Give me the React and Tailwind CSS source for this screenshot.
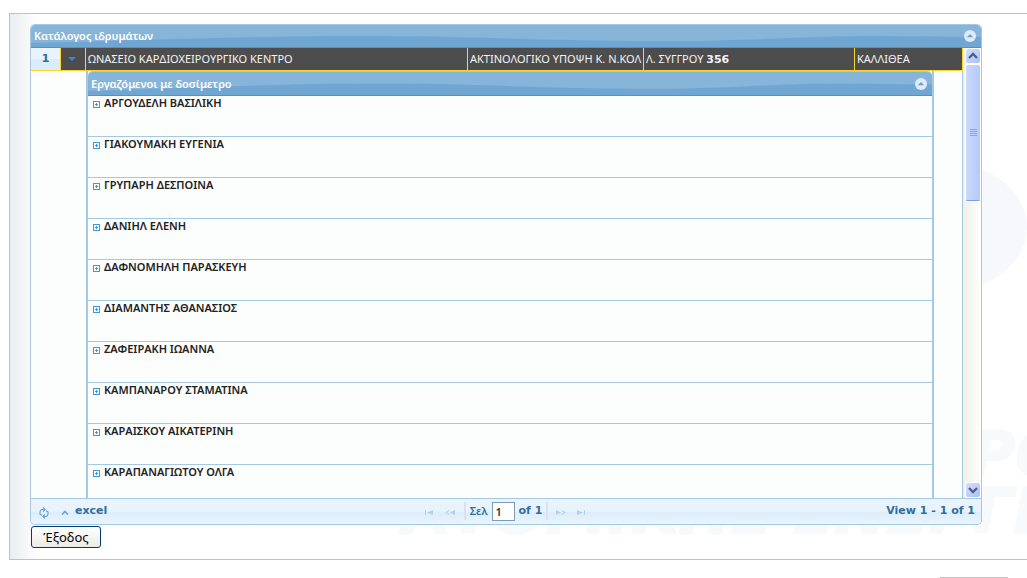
import React from "react";

const employees = [
  "ΑΡΓΟΥΔΕΛΗ ΒΑΣΙΛΙΚΗ",
  "ΓΙΑΚΟΥΜΑΚΗ ΕΥΓΕΝΙΑ",
  "ΓΡΥΠΑΡΗ ΔΕΣΠΟΙΝΑ",
  "ΔΑΝΙΗΛ ΕΛΕΝΗ",
  "ΔΑΦΝΟΜΗΛΗ ΠΑΡΑΣΚΕΥΗ",
  "ΔΙΑΜΑΝΤΗΣ ΑΘΑΝΑΣΙΟΣ",
  "ΖΑΦΕΙΡΑΚΗ ΙΩΑΝΝΑ",
  "ΚΑΜΠΑΝΑΡΟΥ ΣΤΑΜΑΤΙΝΑ",
  "ΚΑΡΑΙΣΚΟΥ ΑΙΚΑΤΕΡΙΝΗ",
  "ΚΑΡΑΠΑΝΑΓΙΩΤΟΥ ΟΛΓΑ",
];

function CaptionBar({ title, className }) {
  return (
    <div
      className={`relative flex items-center justify-between overflow-hidden rounded-t-[5px] border-t border-b border-t-[#a6c9e2] border-b-[#4297d7] bg-[#87b4d9] pr-[5px] pl-[3px] ${className}`}
    >
      <svg
        aria-hidden="true"
        className="absolute inset-0 h-full w-full"
        viewBox="0 0 950 22"
        preserveAspectRatio="none"
      >
        <path
          d="M0 18 C100 16 200 11 330 11 C450 11 500 16 640 16 C720 16 770 11 850 11 L950 12 V22 H0 Z"
          fill="#70a7d2"
        />
      </svg>
      <h2 className="relative text-[11px] leading-4 font-semibold text-white">{title}</h2>
      <button type="button" aria-label="Απόκρυψη πίνακα" className="relative h-3 w-3">
        <svg viewBox="0 0 12 12" className="block h-3 w-3">
          <circle cx="6" cy="6" r="6" fill="#dfeaf6" />
          <path d="M2.800 7.300 L6 4.100 L9.200 7.300 Z" fill="#6ba3d0" />
        </svg>
      </button>
    </div>
  );
}

function ScrollArrow({ d }) {
  return (
    <button
      type="button"
      aria-label="Κύλιση"
      className="flex h-4 w-full shrink-0 items-center justify-center rounded-[3px] border border-white bg-linear-to-br from-[#d5e0fd] to-[#a9c0f8]"
    >
      <svg viewBox="0 0 10 8" className="h-2 w-[10px]" fill="none" stroke="#4d6185" strokeWidth="2.4">
        <path d={d} />
      </svg>
    </button>
  );
}

function PagerButton({ label, children }) {
  return (
    <button type="button" disabled aria-label={label} className="h-[7px] w-3">
      <svg viewBox="0 0 12 7" className="block h-[7px] w-3" fill="#b0d2ec" stroke="none">
        {children}
      </svg>
    </button>
  );
}

function InstitutionRow() {
  const cell = "overflow-hidden border-r border-b border-[#fad42e] p-0 pl-[2px] whitespace-nowrap";
  return (
    <tr className="h-[23px] bg-[#4d4d4d] text-[#f4f4f4]">
      <td className="w-[30px] border-r border-b border-[#fad42e] bg-linear-to-b from-[#e9f3fd] from-50% to-[#dbedfb] to-50% p-0 text-center font-['DejaVu_Sans',sans-serif] font-semibold text-[#2e6e9e]">
        1
      </td>
      <td className="w-[25px] border-r border-b border-[#fad42e] p-0">
        <button type="button" aria-label="Σύμπτυξη" className="flex w-full justify-center pr-[3px]">
          <svg viewBox="0 0 8 4" className="h-1 w-2">
            <path d="M0 0 H8 L4 4 Z" fill="#2f86f5" />
          </svg>
        </button>
      </td>
      <td className={cell}>ΩΝΑΣΕΙΟ ΚΑΡΔΙΟΧΕΙΡΟΥΡΓΙΚΟ ΚΕΝΤΡΟ</td>
      <td className={`w-44 ${cell}`}>ΑΚΤΙΝΟΛΟΓΙΚΟ ΥΠΟΨΗ Κ. Ν.ΚΟΛ</td>
      <td className={`w-[211px] ${cell}`}>
        Λ. ΣΥΓΓΡΟΥ <span className="font-['DejaVu_Sans',sans-serif] leading-3 font-semibold">356</span>
      </td>
      <td className={`w-[108px] ${cell}`}>ΚΑΛΛΙΘΕΑ</td>
    </tr>
  );
}

function EmployeeGrid() {
  return (
    <section className="mr-7 border-x-2 border-[#a6c9e2]">
      <CaptionBar title="Εργαζόμενοι με δοσίμετρο" className="h-[25px]" />
      <ul>
        {employees.map((name) => (
          <li key={name} className="flex h-[41px] items-start border-b border-[#a6c9e2] pl-[5px]">
            <button type="button" aria-label={name} className="mt-[5px] mr-1 h-[7px] w-[7px]">
              <svg viewBox="0 0 7 7" className="block h-[7px] w-[7px]" shapeRendering="crispEdges">
                <path d="M0 0H7V7H0Z M1 1V6H6V1Z M3 2H4V3H5V4H4V5H3V4H2V3H3Z" fill="#4297d7" fillRule="evenodd" />
              </svg>
            </button>
            <span className="text-[11px] leading-[14px] font-semibold text-[#222222]">{name}</span>
          </li>
        ))}
      </ul>
    </section>
  );
}

export default function App() {
  return (
    <div className="relative overflow-hidden bg-white font-['Noto_Sans',sans-serif] text-[11px] leading-4">
      <div className="relative mt-[13px] ml-[9px] overflow-hidden border-y border-l border-[#b9c4c4] pt-[10px] pb-[11px]">
        <div className="absolute inset-y-0 left-0 w-[29px] bg-linear-to-r from-[#e9eeef] to-white" />
        <svg aria-hidden="true" className="absolute top-0 left-0 h-[545px] w-[1017px]" viewBox="10 14 1017 545">
          <ellipse cx="950" cy="227" rx="77" ry="63" fill="#f6f8fb" />
          <g
            fill="#f7f9fb"
            stroke="#f7f9fb"
            strokeWidth="2"
            strokeLinejoin="round"
            fontFamily="DejaVu Sans"
            fontWeight="bold"
            fontStyle="italic"
            fontSize="62"
          >
            <text x="970" y="476">ΡΟ</text>
            <text x="403" y="533">ΑΤΟΜΙΚΗΣ</text>
            <text x="792" y="533">ΕΝΕΡΓΕ</text>
          </g>
        </svg>

        <main className="relative mr-[45px] ml-5">
          <section className="rounded-[5px] border-x border-b border-[#a6c9e2] bg-[#fcfdfd]">
            <CaptionBar title="Κατάλογος ιδρυμάτων" className="h-6" />
            <div className="flex h-[450px] overflow-hidden">
              <div className="min-w-0 flex-1">
                <table className="w-full table-fixed border-separate border-spacing-0">
                  <tbody>
                    <InstitutionRow />
                    <tr>
                      <td colSpan="2" className="p-0" />
                      <td colSpan="4" className="border-r border-[#a6c9e2] p-0">
                        <EmployeeGrid />
                      </td>
                    </tr>
                  </tbody>
                </table>
              </div>
              <div className="flex w-[18px] flex-col bg-linear-to-r from-[#f0efe8] to-[#fefefb] pl-[2px]">
                <ScrollArrow d="M1 6 L5 2 L9 6" />
                <div className="flex h-[137px] flex-col items-center justify-center gap-px rounded-[3px] border border-white border-b-[#7ba0e0] bg-linear-to-r from-[#cad8fd] to-[#b5c9f9]">
                  <span className="h-px w-[7px] bg-[#86a5f0]" />
                  <span className="h-px w-[7px] bg-[#86a5f0]" />
                  <span className="h-px w-[7px] bg-[#86a5f0]" />
                  <span className="h-px w-[7px] bg-[#86a5f0]" />
                </div>
                <div className="flex-1" />
                <ScrollArrow d="M1 2 L5 6 L9 2" />
              </div>
            </div>

            <div className="flex h-[26px] items-center justify-between rounded-b-[5px] border-t border-[#a6c9e2] bg-linear-to-b from-[#e9f3fd] from-50% via-[#dcedfb] via-55% to-[#e9f5fd] px-[6px] pb-[2px] font-semibold text-[#2e6e9e]">
              <div className="flex flex-1 items-center">
                <button type="button" aria-label="Ανανέωση" className="mt-1 mr-3 ml-[2px]">
                  <svg viewBox="0 0 10 12" className="block h-3 w-[10px]" fill="none" stroke="#6ba3d6" strokeWidth="1.2">
                    <path d="M5.5 2.5 H3 Q1 3 1 5 V7 L3 8.5 M4 0.5 L6 2.5 L4 4.5 M4.500 9.500 H7 Q9 9 9 7 V5 L7 3.500 M6 7.500 L4 9.500 L6 11.500" />
                  </svg>
                </button>
                <button type="button" className="flex items-center gap-[6px]">
                  <svg viewBox="0 0 8 5" className="mt-1 h-[5px] w-2" fill="none" stroke="#6ba3d6" strokeWidth="1.6">
                    <path d="M1 4.500 L4 1.500 L7 4.500" />
                  </svg>
                  <span className="font-['DejaVu_Sans',sans-serif]">excel</span>
                </button>
              </div>
              <div className="flex items-center">
                <div className="mt-1 mr-2 flex gap-2">
                  <PagerButton label="Πρώτη">
                    <path d="M1 1H2V6H1Z M9 1V6L3 3.500Z" />
                  </PagerButton>
                  <PagerButton label="Προηγούμενη">
                    <path d="M11 1V6L6 3.500Z M5 1L1 3.500L5 6L5.500 5L3 3.500L5.500 2Z" />
                  </PagerButton>
                </div>
                <span className="mr-1 h-[18px] w-[2px] bg-[#dae3ea]" />
                <label htmlFor="page" className="mr-1">Σελ</label>
                <input
                  id="page"
                  defaultValue="1"
                  className="mt-px h-[19px] w-[23px] border border-[#7f9db9] bg-white pl-[3px] text-[11px] text-[#333333]"
                />
                <span className="ml-1 font-['DejaVu_Sans',sans-serif]">of 1</span>
                <span className="ml-1 h-[18px] w-[2px] bg-[#dae3ea]" />
                <div className="mt-1 ml-2 flex gap-2">
                  <PagerButton label="Επόμενη">
                    <path d="M0 1V6L5 3.500Z M6 1L10 3.500L6 6L5.500 5L8 3.500L5.500 2Z" />
                  </PagerButton>
                  <PagerButton label="Τελευταία">
                    <path d="M1 1V6L7 3.500Z M8 1H9V6H8Z" />
                  </PagerButton>
                </div>
              </div>
              <div className="flex-1 text-right font-['DejaVu_Sans',sans-serif]">View 1 - 1 of 1</div>
            </div>
          </section>

          <button
            type="button"
            className="mt-px ml-px flex h-[22px] w-[70px] items-center justify-center rounded-[3px] border border-[#003c74] bg-linear-to-b from-white to-[#ecebe5] text-[13px] text-black"
          >
            Έξοδος
          </button>
        </main>
      </div>
      <div className="mt-[17px] mr-[19px] ml-auto h-px w-[68px] bg-[#c4c4c4]" />
    </div>
  );
}
